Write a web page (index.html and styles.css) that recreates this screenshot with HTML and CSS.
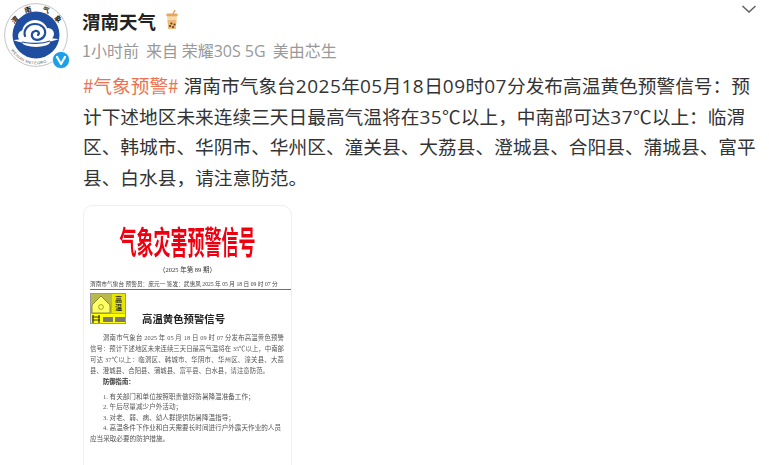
FILE: index.html
```html
<!DOCTYPE html>
<html lang="zh-CN">
<head>
  <meta charset="UTF-8" />
  <title>渭南天气</title>
  <link rel="stylesheet" href="styles.css">
</head>
<body>
  <div class="post">
    <div class="avatar">
      <svg class="avatar-logo" viewBox="0 0 64 64" width="64" height="64">
        <circle cx="32" cy="32" r="31.4" fill="#fff" stroke="#c4c4c4" stroke-width="1"/>
        <circle cx="32" cy="32" r="23.5" fill="#1f4da0"/>
        <g fill="#fff">
          <circle cx="31" cy="30" r="13"/>
          <circle cx="20" cy="33" r="6"/>
          <circle cx="44" cy="31" r="6"/>
          <ellipse cx="32" cy="39" rx="14" ry="5"/>
          <path d="M9 37c5 0 9-1 12-3l3 6c-5 0-10-1-15-3zM55 36c-5 0-9-1-12-3l-3 6c5 0 10-1 15-3z"/>
        </g>
        <path d="M21 33c-2-6 3-12 10-12 6 0 11 4 10 10-1 5-7 7-11 5-3-2-3-7 1-8 3-1 5 2 3 4" fill="none" stroke="#1f4da0" stroke-width="2.2" stroke-linecap="round"/>
        <path d="M18 39c8 2 20 2 28-1" fill="none" stroke="#1f4da0" stroke-width="1.2"/>
        <g class="ring-cn" text-anchor="middle">
          <text x="11" y="19.5" transform="rotate(-45 11 17)">渭</text>
          <text x="24" y="9.5" transform="rotate(-15 24 7)">南</text>
          <text x="42" y="9.5" transform="rotate(15 42 7)">气</text>
          <text x="54" y="18.5" transform="rotate(45 54 16)">象</text>
        </g>
        <path id="ringpath" d="M7 47A29 29 0 0 0 57 47" fill="none"/>
        <text class="ring-en"><textPath href="#ringpath">WEINAN METEORO</textPath></text>
      </svg>
      <svg class="avatar-badge" viewBox="0 0 18 18" width="18" height="18">
        <circle cx="9" cy="9" r="8.6" fill="#1d9fe8" stroke="#fff" stroke-width="0.8"/>
        <path d="M5 6l4 7 4-7" fill="none" stroke="#fff" stroke-width="2.2" stroke-linecap="round" stroke-linejoin="round"/>
      </svg>
    </div>
    <div class="head-text">
      <div class="name-row">
        <span class="name">渭南天气</span>
        <svg class="tea" viewBox="0 0 14 20" width="14" height="20">
          <path d="M8 4l2-4" stroke="#e2954c" stroke-width="1.2"/>
          <path d="M2 5h10l-1.2 14h-7.6z" fill="#f6d9a8"/>
          <path d="M2.6 10h8.8l-.7 9h-7.4z" fill="#eeb877"/>
          <rect x="1.4" y="3.6" width="11.2" height="2.6" rx="1" fill="#e8a55f"/>
          <g fill="#5b3a22"><circle cx="5" cy="16" r="1.1"/><circle cx="8" cy="17" r="1.1"/><circle cx="9.5" cy="14.4" r="1"/><circle cx="6.4" cy="13.6" r="1"/></g>
        </svg>
      </div>
      <div class="meta">1小时前&nbsp; 来自 荣耀<span class="meta-en">30S 5G</span>&nbsp; 美由芯生</div>
    </div>
    <svg class="chevron" viewBox="0 0 16 8" width="16" height="8">
      <path d="M1.5 1l6.5 6 6.5-6" fill="none" stroke="#666" stroke-width="1.6"/>
    </svg>
    <p class="post-text"><span class="topic">#气象预警#</span> 渭南市气象台<span class="num">2025</span>年<span class="num">05</span>月<span class="num">18</span>日<span class="num">09</span>时<span class="num">07</span>分发布高温黄色预警信号<span class="mark">：</span>预计下述地区未来连续三天日最高气温将在<span class="num">35</span>℃以上<span class="mark">，</span>中南部可达<span class="num">37</span>℃以上<span class="mark">：</span>临渭区、韩城市、华阴市、华州区、潼关县、大荔县、澄城县、合阳县、蒲城县、富平县、白水县<span class="mark">，</span>请注意防范。</p>
    <div class="card">
      <div class="doc">
        <div class="doc-title"><span>气象灾害预警信号</span></div>
        <div class="doc-issue">（2025 年第 89 期）</div>
        <div class="doc-sign">渭南市气象台 预警员：庞元一 签发：武惠凤 2025 年 05 月 18 日 09 时 07 分</div>
        <div class="doc-rule"></div>
        <div class="doc-head">
          <svg class="warn-icon" viewBox="0 0 36 31" width="36" height="31">
            <rect width="36" height="31" fill="#b9b94a"/>
            <rect x="0.5" y="0.5" width="35" height="30" fill="none" stroke="#999"/>
            <path d="M2 12L11 3l9 9v8H2z" fill="#ffff66" stroke="#8a8a30"/>
            <circle cx="11" cy="14" r="2.4" fill="none" stroke="#a8a020"/>
            <rect x="22" y="1" width="13" height="19" fill="#e6e600"/>
            <text x="28.5" y="9" class="warn-small" text-anchor="middle">高</text>
            <text x="28.5" y="17" class="warn-small" text-anchor="middle">温</text>
            <rect x="1" y="21" width="34" height="9" fill="#ffff00"/>
            <rect x="13" y="24" width="10" height="5" fill="#777"/>
            <rect x="25" y="24" width="10" height="5" fill="#777"/>
            <path d="M3 30v-8M9 30v-8M2 24h8M2 27h8" stroke="#333" stroke-width="1.2"/>
          </svg>
          <div class="doc-subtitle">高温黄色预警信号</div>
        </div>
        <p class="doc-para">渭南市气象台 2025 年 05 月 18 日 09 时 07 分发布高温黄色预警信号：预计下述地区未来连续三天日最高气温将在 35℃以上，中南部可达 37℃以上：临渭区、韩城市、华阴市、华州区、潼关县、大荔县、澄城县、合阳县、蒲城县、富平县、白水县，请注意防范。</p>
        <p class="doc-guide">防御指南：</p>
        <ol class="doc-list">
          <li>1. 有关部门和单位按照职责做好防暑降温准备工作；</li>
          <li>2. 午后尽量减少户外活动；</li>
          <li>3. 对老、弱、病、幼人群提供防暑降温指导；</li>
          <li class="doc-wrap">4. 高温条件下作业和白天需要长时间进行户外露天作业的人员应当采取必要的防护措施。</li>
        </ol>
      </div>
    </div>
  </div>
</body>
</html>
```

FILE: styles.css
```css
html, body {
  margin: 0;
  height: 465px;
  overflow: hidden;
  background: #fff;
}
body {
  font-family: "Noto Sans CJK SC", "Liberation Sans", sans-serif;
  color: #333;
}
.post {
  display: grid;
  grid-template-columns: 82px 1fr auto;
  padding: 3px 12px 0 0;
}
.avatar {
  position: relative;
  margin-left: 4px;
  width: 64px;
  height: 64px;
}
.avatar-logo {
  display: block;
}
.ring-cn {
  font-family: "Noto Sans CJK SC", sans-serif;
  font-size: 7px;
  font-weight: 700;
  fill: #222;
}
.ring-en {
  font-family: "Liberation Sans", sans-serif;
  font-size: 3.8px;
  letter-spacing: 0.4px;
  fill: #555;
}
.avatar-badge {
  position: absolute;
  right: -2px;
  bottom: -2px;
}
.head-text {
  padding-top: 5px;
}
.name-row {
  display: flex;
  align-items: center;
  gap: 9px;
  height: 26px;
}
.name {
  font-size: 18.5px;
  font-weight: 700;
  color: #222;
}
.tea {
  margin-top: -3px;
}
.meta {
  margin-top: 6px;
  font-size: 16px;
  line-height: 20px;
  color: #999;
}
.meta-en {
  font-family: "Open Sans", sans-serif;
}
.chevron {
  margin-top: 2px;
}
.post-text {
  grid-column: 1 / -1;
  margin: 3px -1px 0 83px;
  font-size: 18.7px;
  line-height: 30.5px;
}
.topic {
  color: #eb7350;
  margin-right: 1px;
}
.num {
  font-family: "Open Sans", sans-serif;
  font-size: 19px;
  font-weight: 500;
  line-height: 1;
  letter-spacing: 0.5px;
}
.mark {
  font-family: "Noto Sans CJK TC", sans-serif;
}
.card {
  grid-column: 1 / -1;
  margin: 13px 0 0 83px;
  width: 209px;
  height: 300px;
  box-sizing: border-box;
  border: 1px solid #efefef;
  border-radius: 10px;
  overflow: hidden;
}
.doc {
  height: 100%;
  padding: 0 0 0 6px;
  font-family: "Liberation Serif", "Noto Sans CJK SC", serif;
  color: #333;
  filter: blur(0.3px);
}
.doc-title {
  margin: 18px 0 0 -6px;
  height: 34px;
  text-align: center;
  font-family: "Noto Sans CJK SC", sans-serif;
  font-size: 17px;
  font-weight: 700;
  line-height: 34px;
  color: #ee0010;
}
.doc-title span {
  display: inline-block;
  transform: scaleY(1.9);
}
.doc-issue {
  margin: 7px 0 0 -6px;
  text-align: center;
  font-size: 6.5px;
  line-height: 9px;
}
.doc-sign {
  margin-top: 6px;
  font-size: 5.7px;
  line-height: 8px;
  white-space: nowrap;
  color: #444;
}
.doc-rule {
  margin-top: 1px;
  height: 1px;
  background: #e83a46;
}
.doc-head {
  display: flex;
  margin-top: 3px;
  height: 38px;
}
.warn-icon {
  display: block;
}
.warn-small {
  font-family: "Noto Sans CJK SC", sans-serif;
  font-size: 7px;
  font-weight: 700;
  fill: #333;
}
.doc-subtitle {
  margin: 19px 0 0 16px;
  font-family: "Noto Sans CJK SC", sans-serif;
  font-size: 10.4px;
  font-weight: 700;
  line-height: 14px;
  color: #222;
}
.doc-para {
  margin: 1px 7px 0 0;
  font-size: 6.4px;
  line-height: 11px;
  text-indent: 13px;
  text-align: justify;
  color: #555;
}
.doc-guide {
  margin: 0 0 0 13px;
  font-size: 6.3px;
  font-weight: 700;
  line-height: 11px;
}
.doc-list {
  list-style: none;
  margin: 5px 7px 0 0;
  padding: 0 0 0 13px;
  font-size: 6.6px;
  line-height: 10.4px;
  color: #555;
}
.doc-wrap {
  margin-left: -13px;
  text-indent: 13px;
}
```
